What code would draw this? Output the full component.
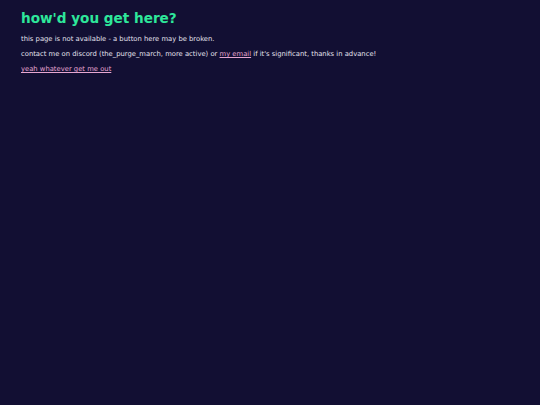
export default function App() {
  return (
    <div
      className="min-h-screen bg-[#120f33] px-[21px] pt-[9px] text-[#e4e2ee]"
      style={{ fontFamily: '"DejaVu Sans", Verdana, sans-serif' }}
    >
      <h1 className="text-[13.6px] font-bold leading-[18px] text-[#2ee79b]">how&apos;d you get here?</h1>
      <p className="mt-[7px] text-[6.8px] leading-[10px]">
        this page is not available - a button here may be broken.
      </p>
      <p className="mt-[5px] text-[6.8px] leading-[10px]">
        contact me on discord (the_purge_march, more active) or{" "}
        <a href="#" className="text-[#e6a6d2] underline">my email</a> if it&apos;s significant, thanks in advance!
      </p>
      <p className="mt-[5px] text-[6.8px] leading-[10px]">
        <a href="#" className="text-[#e6a6d2] underline">yeah whatever get me out</a>
      </p>
    </div>
  );
}
